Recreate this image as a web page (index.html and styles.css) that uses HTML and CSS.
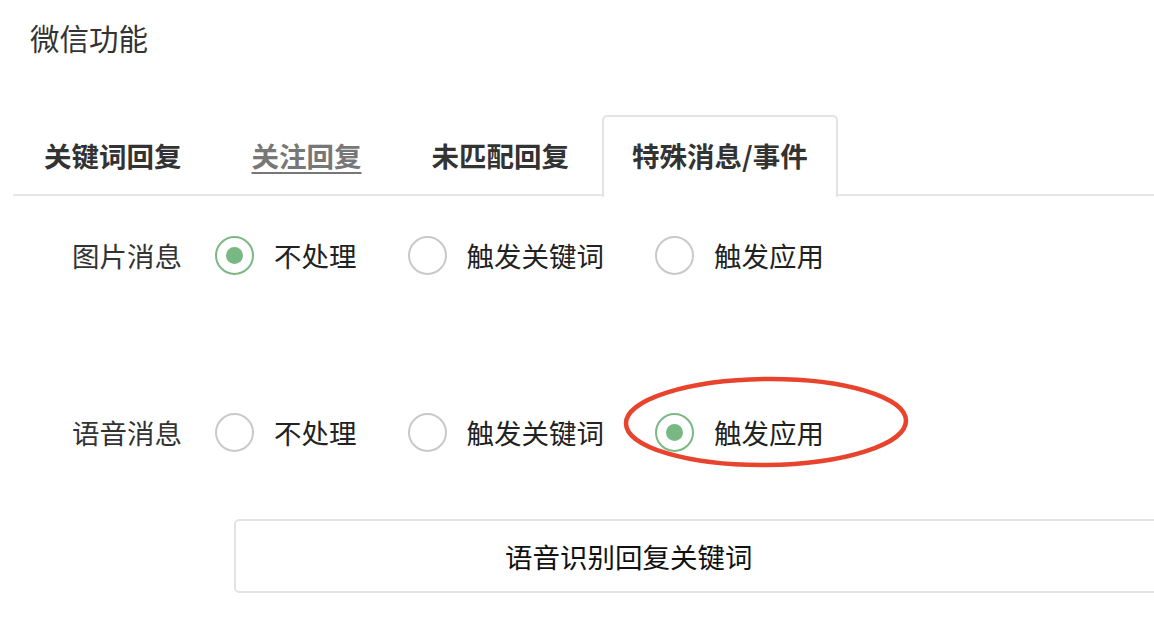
FILE: index.html
```html
<!DOCTYPE html>
<html lang="zh-CN">
<head>
<meta charset="utf-8">
<title>微信功能</title>
<link rel="stylesheet" href="styles.css">
</head>
<body>
<div class="page">
  <h1 class="title">微信功能</h1>
  <div class="tabs">
    <div class="tab">关键词回复</div>
    <div class="tab tab-link">关注回复</div>
    <div class="tab">未匹配回复</div>
    <div class="tab tab-active">特殊消息/事件</div>
  </div>
  <div class="form">
    <div class="row">
      <span class="label">图片消息</span>
      <span class="option"><span class="radio checked"></span><span class="opt-text">不处理</span></span>
      <span class="option"><span class="radio"></span><span class="opt-text">触发关键词</span></span>
      <span class="option"><span class="radio"></span><span class="opt-text">触发应用</span></span>
    </div>
    <div class="row row-second">
      <span class="label">语音消息</span>
      <span class="option"><span class="radio"></span><span class="opt-text">不处理</span></span>
      <span class="option"><span class="radio"></span><span class="opt-text">触发关键词</span></span>
      <span class="option"><span class="radio checked"></span><span class="opt-text">触发应用</span></span>
    </div>
    <div class="button">语音识别回复关键词</div>
  </div>
  <svg class="mark" width="295" height="100" viewBox="0 0 295 100" aria-hidden="true">
    <ellipse cx="143" cy="46" rx="140" ry="43" fill="none" stroke="#e8432d" stroke-width="4.5" transform="rotate(-0.6 143 46)"/>
  </svg>
</div>
</body>
</html>
```
FILE: styles.css
```css
html, body {
  margin: 0;
  padding: 0;
  background: #ffffff;
}
body {
  overflow: hidden;
  font-family: "Noto Sans CJK SC", "Noto Sans", sans-serif;
  color: #333333;
}
.page {
  position: relative;
  width: 1154px;
  height: 630px;
  overflow: hidden;
}
.title {
  margin: 0;
  padding: 18px 0 0 30px;
  font-size: 29.5px;
  line-height: 38px;
  font-weight: 400;
  color: #333333;
}
.tabs {
  display: flex;
  margin: 59px 0 0 13px;
  border-bottom: 2px solid #e6e6e6;
  height: 79px;
}
.tab {
  padding: 0 31px;
  margin-right: 8px;
  height: 78px;
  border-top: 1px solid transparent;
  line-height: 78px;
  font-size: 27.5px;
  font-weight: 700;
  color: #333333;
  white-space: nowrap;
}
.tab-link {
  color: #777777;
  text-decoration: underline;
  text-underline-offset: 5px;
  text-decoration-thickness: 2px;
}
.tab-active {
  margin-left: -6px;
  padding: 0 28px;
  height: 80px;
  border: 2px solid #e3e3e3;
  border-bottom: none;
  border-radius: 5px 5px 0 0;
  background: #ffffff;
  line-height: 76px;
}
.form {
  padding-top: 39px;
}
.row {
  display: flex;
  align-items: center;
  height: 40px;
  padding-left: 72px;
  font-size: 27.5px;
}
.row-second {
  margin-top: 137px;
}
.label {
  margin-right: 33px;
  color: #333333;
  line-height: 40px;
}
.option {
  display: flex;
  align-items: center;
  margin-right: 51px;
}
.radio {
  box-sizing: border-box;
  width: 39px;
  height: 39px;
  border: 2.5px solid #c9c9c9;
  border-radius: 50%;
  display: flex;
  align-items: center;
  justify-content: center;
}
.radio.checked {
  border-color: #7cb884;
}
.radio.checked::after {
  content: "";
  width: 17px;
  height: 17px;
  border-radius: 50%;
  background: #78b882;
}
.opt-text {
  margin-left: 20px;
  color: #222222;
  line-height: 40px;
}
.button {
  box-sizing: border-box;
  margin: 67px 0 0 234px;
  width: 1000px;
  height: 74px;
  border: 2px solid #e3e3e3;
  border-radius: 5px;
  padding-left: 269px;
  line-height: 70px;
  font-size: 27.5px;
  color: #111111;
}
.mark {
  position: absolute;
  left: 623px;
  top: 376px;
}
```
